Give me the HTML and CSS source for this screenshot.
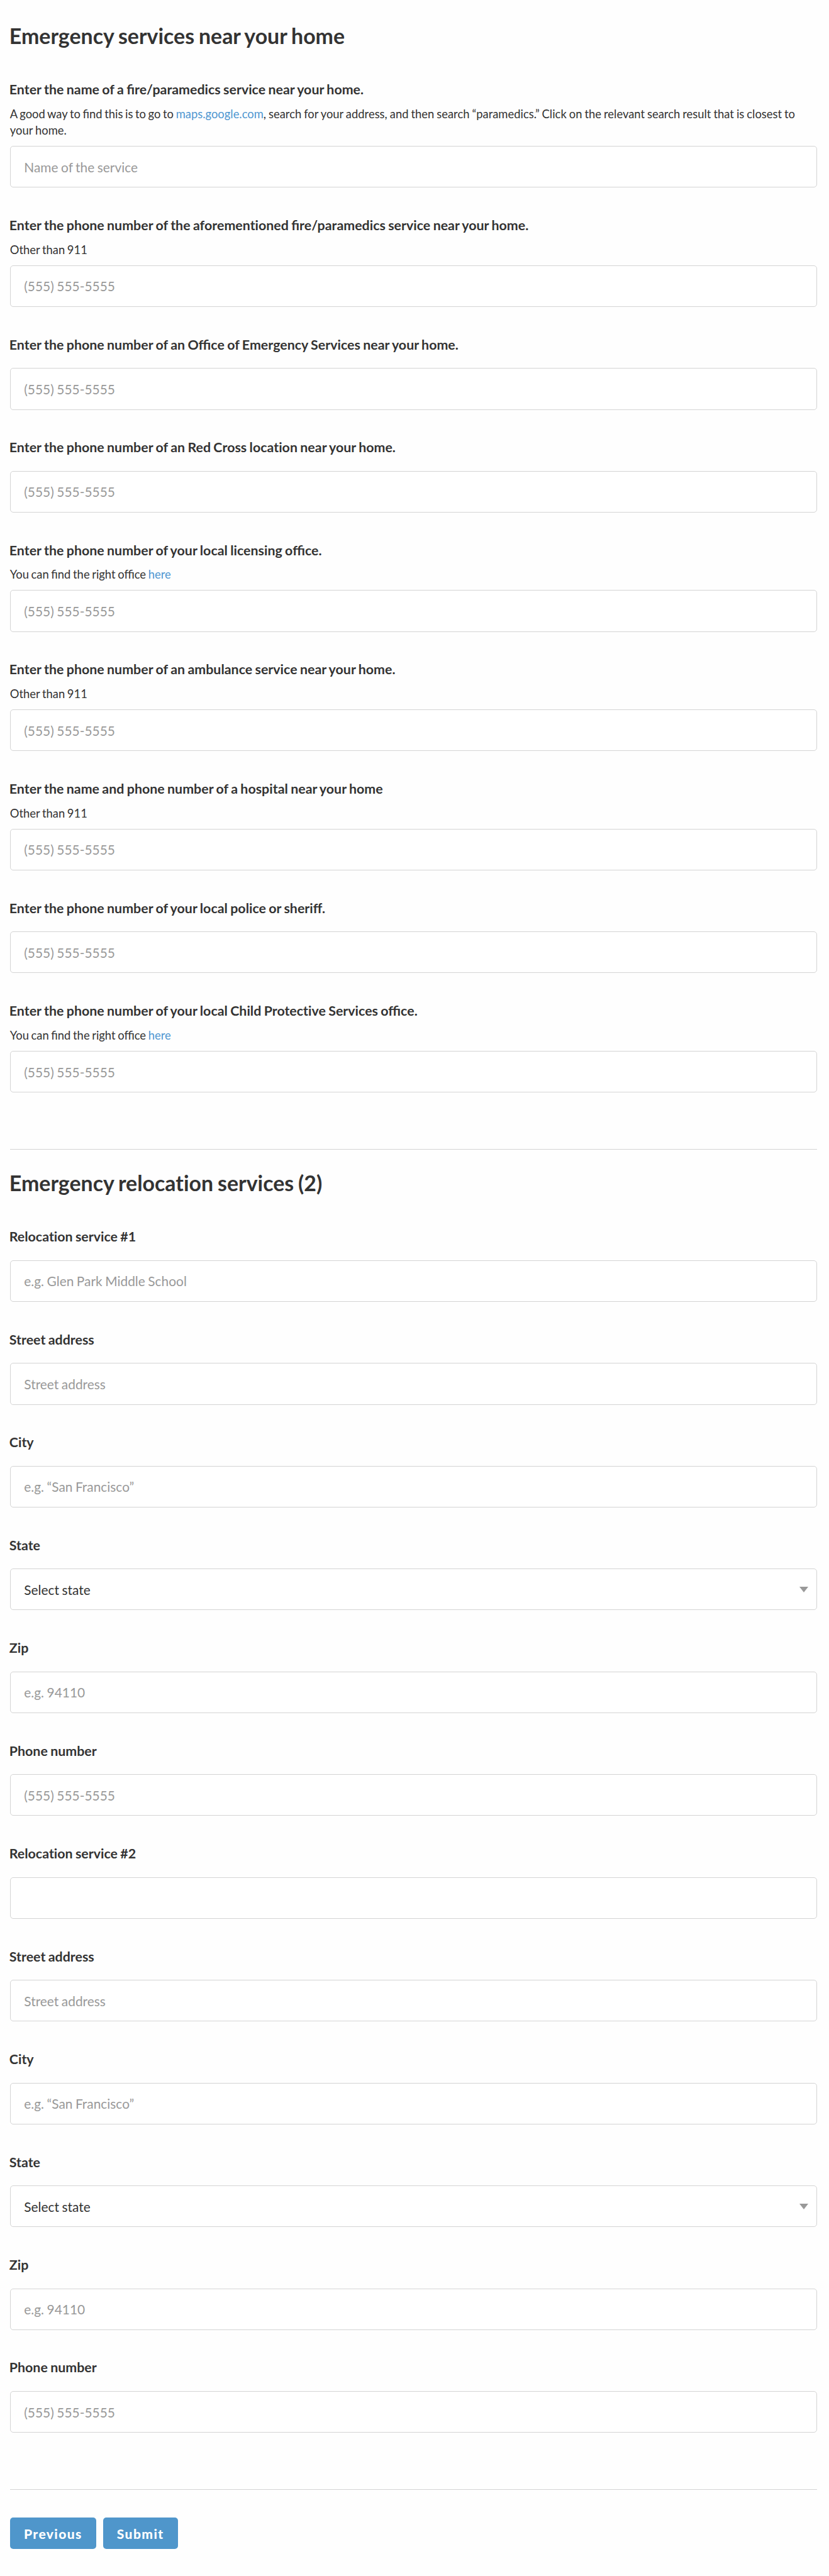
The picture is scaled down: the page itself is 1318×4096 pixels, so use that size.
FILE: index.html
```html
<!DOCTYPE html>
<html lang="en">
<head>
    <meta charset="UTF-8">
    <meta name="viewport" content="width=device-width, initial-scale=1.0">
    <title>Emergency services</title>
    <link rel="stylesheet" href="styles.css">
</head>
<body>
    <form class="form">
        <section class="section">
            <h2>Emergency services near your home</h2>

            <div class="field">
                <label for="fire-name">Enter the name of a fire/paramedics service near your home.</label>
                <p class="help">A good way to find this is to go to <a href="#">maps.google.com</a><span class="wide">, search for your address, and then search “paramedics.” Click on the relevant search result that is closest to your home.</span></p>
                <input type="text" id="fire-name" placeholder="Name of the service">
            </div>

            <div class="field">
                <label for="fire-phone">Enter the phone number of the <span class="no-liga">aforementioned</span> fire/paramedics service near your home.</label>
                <p class="help">Other than 911</p>
                <input type="tel" id="fire-phone" placeholder="(555) 555-5555">
            </div>

            <div class="field">
                <label for="oes-phone">Enter the phone number of an Office of Emergency Services near your home.</label>
                <input type="tel" id="oes-phone" placeholder="(555) 555-5555">
            </div>

            <div class="field">
                <label for="red-cross-phone" class="no-liga">Enter the phone number of an Red Cross location near your home.</label>
                <input type="tel" id="red-cross-phone" placeholder="(555) 555-5555">
            </div>

            <div class="field">
                <label for="licensing-phone">Enter the phone number of your local licensing office.</label>
                <p class="help">You can find the right office <a href="#">here</a></p>
                <input type="tel" id="licensing-phone" placeholder="(555) 555-5555">
            </div>

            <div class="field">
                <label for="ambulance-phone">Enter the phone number of an ambulance service near your home.</label>
                <p class="help">Other than 911</p>
                <input type="tel" id="ambulance-phone" placeholder="(555) 555-5555">
            </div>

            <div class="field">
                <label for="hospital-phone">Enter the name and phone number of a hospital near your home</label>
                <p class="help">Other than 911</p>
                <input type="tel" id="hospital-phone" placeholder="(555) 555-5555">
            </div>

            <div class="field">
                <label for="police-phone">Enter the phone number of your local police or sheriff.</label>
                <input type="tel" id="police-phone" placeholder="(555) 555-5555">
            </div>

            <div class="field">
                <label for="cps-phone">Enter the phone number of your local Child <span class="no-liga">Protective</span> Services office.</label>
                <p class="help">You can find the right office <a href="#">here</a></p>
                <input type="tel" id="cps-phone" placeholder="(555) 555-5555">
            </div>
        </section>

        <section class="section">
            <h2 class="no-liga">Emergency relocation services (2)</h2>

            <div class="field">
                <label for="relocation-1" class="no-liga">Relocation service #1</label>
                <input type="text" id="relocation-1" placeholder="e.g. Glen Park Middle School">
            </div>
            <div class="field">
                <label for="street-1">Street address</label>
                <input type="text" id="street-1" placeholder="Street address">
            </div>
            <div class="field">
                <label for="city-1">City</label>
                <input type="text" id="city-1" placeholder="e.g. “San Francisco”">
            </div>
            <div class="field">
                <label for="state-1">State</label>
                <div class="select">
                    <select id="state-1">
                        <option>Select state</option>
                    </select>
                </div>
            </div>
            <div class="field">
                <label for="zip-1">Zip</label>
                <input type="text" id="zip-1" placeholder="e.g. 94110">
            </div>
            <div class="field">
                <label for="phone-1">Phone number</label>
                <input type="tel" id="phone-1" placeholder="(555) 555-5555">
            </div>

            <div class="field">
                <label for="relocation-2" class="no-liga">Relocation service #2</label>
                <input type="text" id="relocation-2">
            </div>
            <div class="field">
                <label for="street-2">Street address</label>
                <input type="text" id="street-2" placeholder="Street address">
            </div>
            <div class="field">
                <label for="city-2">City</label>
                <input type="text" id="city-2" placeholder="e.g. “San Francisco”">
            </div>
            <div class="field">
                <label for="state-2">State</label>
                <div class="select">
                    <select id="state-2">
                        <option>Select state</option>
                    </select>
                </div>
            </div>
            <div class="field">
                <label for="zip-2">Zip</label>
                <input type="text" id="zip-2" placeholder="e.g. 94110">
            </div>
            <div class="field">
                <label for="phone-2">Phone number</label>
                <input type="tel" id="phone-2" placeholder="(555) 555-5555">
            </div>
        </section>

        <div class="actions">
            <button type="button" class="btn">Previous</button>
            <button type="submit" class="btn">Submit</button>
        </div>
    </form>
</body>
</html>
```
FILE: styles.css
```css
* {
    margin: 0;
    padding: 0;
    box-sizing: border-box;
}

body {
    font-family: Lato, "Liberation Sans", sans-serif;
    font-size: 21px;
    color: #333;
    background: #fefefe;
}

.form {
    padding: 36.6px 19.4px 0 15.8px;
}

.section {
    padding-bottom: 42.7px;
    margin-bottom: 33.2px;
    border-bottom: 1px solid #d4d4d4;
}

h2 {
    font-size: 33.9px;
    line-height: 40px;
    font-weight: 700;
    word-spacing: -0.04em;
    margin: 0 0 52.6px -1px;
}

.field {
    display: flex;
    flex-direction: column;
    margin-bottom: 46.7px;
}

label {
    font-size: 21.4px;
    font-weight: 700;
    line-height: 26px;
    word-spacing: -0.04em;
    margin: 0 0 12.5px -1px;
}

.no-liga {
    font-variant-ligatures: none;
}

.help {
    font-size: 18.4px;
    line-height: 26.2px;
    word-spacing: -0.06em;
}

.wide {
    word-spacing: -0.038em;
}

a {
    color: #4f97d1;
    text-decoration: none;
}

input, select {
    display: block;
    width: 100%;
    height: 66.2px;
    padding: 0 21.5px;
    border: 1px solid #d4d4d4;
    border-radius: 5px;
    background: #fff;
    font-family: inherit;
    font-size: 20.9px;
    word-spacing: -0.04em;
    color: #333;
    appearance: none;
}

input, .select {
    margin-top: 12.1px;
}

input::placeholder {
    color: #999;
}

.select {
    position: relative;
}

.select::after {
    content: "";
    position: absolute;
    top: 28.6px;
    right: 13.6px;
    border: 7.2px solid transparent;
    border-top: 9.6px solid #999;
    border-bottom: 0;
}

.actions {
    display: flex;
    gap: 10.9px;
    padding-top: 11.5px;
}

.btn {
    height: 50px;
    padding: 0 22.1px;
    border: 0;
    border-radius: 5px;
    background: #4f96cb;
    color: #fff;
    font-family: inherit;
    font-size: 21px;
    font-weight: 900;
    letter-spacing: 1.4px;
}
```
